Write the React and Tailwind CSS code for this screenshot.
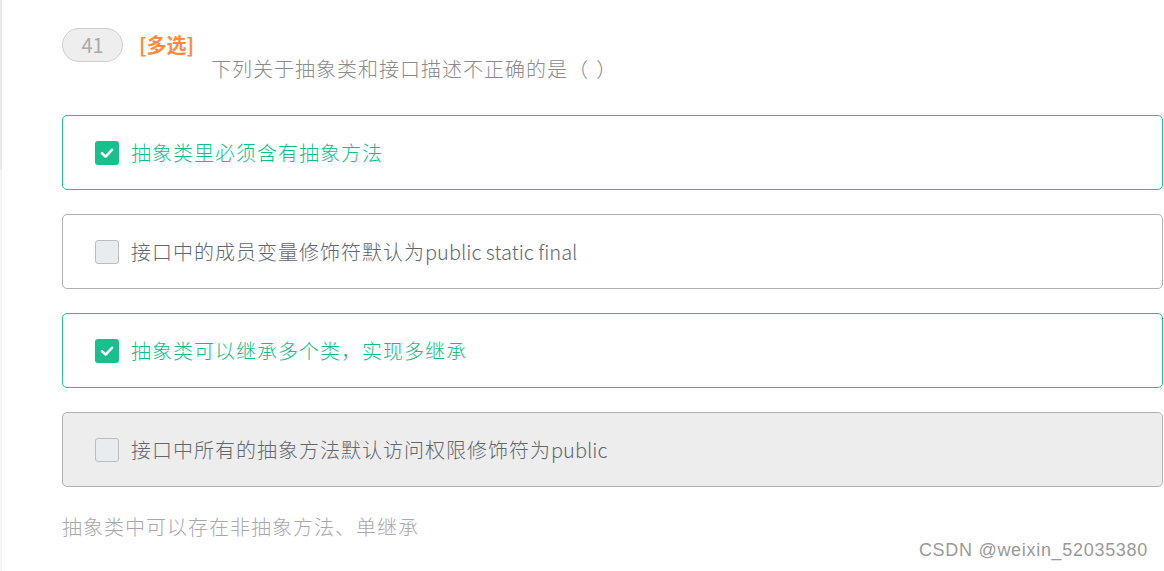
import React from "react";

const font = { fontFamily: '"Noto Sans CJK SC", "Noto Sans", sans-serif' };

function Mixed({ text }) {
  const parts = text.split(/([A-Za-z0-9 ]{2,})/).filter(Boolean);
  return (
    <>
      {parts.map((p, i) =>
        /^[A-Za-z0-9 ]+$/.test(p) && p.length > 1 ? (
          <span key={i} className="tracking-normal">
            {p}
          </span>
        ) : (
          <span key={i}>{p}</span>
        )
      )}
    </>
  );
}

function Check({ checked }) {
  if (checked) {
    return (
      <span className="flex h-[24px] w-[24px] shrink-0 items-center justify-center rounded-[3px] bg-[#17c08c]">
        <svg width="16" height="16" viewBox="0 0 16 16" fill="none">
          <path d="M3 8.2 L6.6 11.6 L13 4.8" stroke="white" strokeWidth="2.6" strokeLinecap="round" strokeLinejoin="round" />
        </svg>
      </span>
    );
  }
  return <span className="h-[24px] w-[24px] shrink-0 rounded-[3px] border border-[#b9bec4] bg-[#e8ecef]" />;
}

function Option({ text, checked, muted }) {
  return (
    <div
      className={
        "flex h-[75px] items-center gap-[12px] rounded-[5px] border px-[32px] " +
        (checked
          ? "border-[#1fc491] bg-white text-[#10bd87]"
          : muted
          ? "border-[#b0b0b0] bg-[#ededed] text-[#62676e]"
          : "border-[#b0b0b0] bg-white text-[#62676e]")
      }
    >
      <Check checked={checked} />
      <span className="text-[20px] font-light leading-[28px] tracking-[1px]">
        <Mixed text={text} />
      </span>
    </div>
  );
}

export default function App() {
  return (
    <div className="relative h-[571px] w-[1164px] overflow-hidden bg-white" style={font}>
      <div className="absolute left-0 top-0 h-[170px] w-[2px] bg-[#ebebeb]" />
      <div className="absolute left-0 top-[170px] h-[401px] w-[2px] bg-[#f4f4f4]" />
      <div className="ml-[62px] mr-[1px] pt-[28px]">
        <div className="flex items-start">
          <div className="flex h-[34px] w-[61px] items-center justify-center rounded-full border border-[#cfcfcf] bg-[#eeeeee] text-[20px] text-[#aaaaaa]">
            41
          </div>
          <div className="ml-[16px] mt-[3px] text-[20px] font-bold leading-[28px] text-[#ff8a3d]">[多选]</div>
          <div className="ml-[17px] mt-[27px] text-[20px] font-light leading-[28px] tracking-[1px] text-[#8a8a8a]">
            下列关于抽象类和接口描述不正确的是（<span className="ml-[7px]">）</span>
          </div>
        </div>
        <div className="mt-[32px] flex flex-col gap-[24px]">
          <Option text="抽象类里必须含有抽象方法" checked />
          <Option text="接口中的成员变量修饰符默认为public static final" />
          <Option text="抽象类可以继承多个类，实现多继承" checked />
          <Option text="接口中所有的抽象方法默认访问权限修饰符为public" muted />
        </div>
        <div className="mt-[26px] text-[20px] font-light leading-[28px] tracking-[1px] text-[#a8a8a8]">
          抽象类中可以存在非抽象方法、单继承
        </div>
      </div>
      <div
        className="absolute bottom-[7px] right-[16px] text-[18px] tracking-[0.7px] text-[#9a9a9a]"
        style={{ fontFamily: '"Liberation Sans", Arial, sans-serif', textShadow: "0 0 1px #fff" }}
      >
        CSDN @weixin_52035380
      </div>
    </div>
  );
}
